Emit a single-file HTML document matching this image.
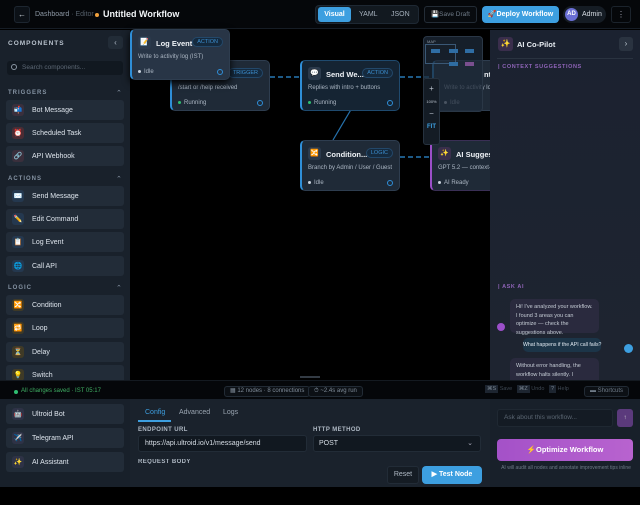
<!DOCTYPE html><html><head><style>
*{box-sizing:border-box;margin:0;padding:0}
body{width:640px;height:505px;background:#000;font-family:"Liberation Sans",sans-serif;color:#dfe6ee;position:relative;overflow:hidden;font-size:7px}
.a{position:absolute}
.item{position:absolute;left:6px;width:118px;height:20px;background:#222c38;border-radius:3px;font-size:7px;color:#dde4ec;display:flex;align-items:center;padding-left:6px}
.ic{width:12px;height:12px;border-radius:3px;background:#3a3440;margin-right:8px;font-size:7px;display:flex;align-items:center;justify-content:center}
.sec{position:absolute;left:8px;font-size:6px;letter-spacing:1px;color:#8593a3;font-weight:bold}
.car{position:absolute;right:8px;color:#8593a3;font-size:7px}
.node{position:absolute;width:100px;height:51px;background:#1f2a37;border:1px solid #2e3d4f;border-left:2px solid #2f8fd8;border-radius:5px;overflow:hidden}
.node .t{position:absolute;left:24px;top:9px;font-size:7.5px;font-weight:bold;color:#eef2f6;white-space:nowrap}
.node .ni{position:absolute;left:6px;top:6px;width:13px;height:13px;border-radius:3px;background:#2b3a4c;font-size:7px;text-align:center;line-height:13px}
.node .tag{position:absolute;right:6px;top:7px;font-size:5.5px;color:#3c8fd0;border:1px solid #23486a;background:#152a3e;border-radius:6px;padding:1px 4px}
.node .d{position:absolute;left:6px;top:24px;font-size:6px;color:#aab5c2;white-space:nowrap}
.node .s{position:absolute;left:6px;top:39px;font-size:6px;color:#aab5c2}
.node .s:before{content:"";display:inline-block;width:3px;height:3px;border-radius:50%;background:#c9d2dc;margin-right:3px;vertical-align:middle}
.node .s.g:before{background:#2fbf71}
.node .o{position:absolute;right:6px;top:39px;width:6px;height:6px;border:1.5px solid #2f8fd8;border-radius:50%}
.pill{position:absolute;height:11px;border:1px solid #222b35;background:#0c1015;border-radius:3px;font-size:6px;color:#7f8b98;line-height:9px;padding:0 5px;white-space:nowrap}
</style></head><body>
<!-- top bar -->
<div class="a" style="left:0;top:0;width:640px;height:29px;background:#05070a;border-bottom:1px solid #161d26"></div>
<div class="a" style="left:14px;top:6px;width:16px;height:17px;border:1px solid #1d2630;border-radius:3px;background:#0c1117;color:#cfd6de;font-size:8px;text-align:center;line-height:15px">←</div>
<div class="a" style="left:35px;top:11px;font-size:7px;color:#8d98a5;white-space:nowrap">Dashboard <span style="color:#555f6a">· Editor</span></div>
<div class="a" style="left:95px;top:13px;width:4px;height:4px;border-radius:50%;background:#f0a03c"></div>
<div class="a" style="left:103px;top:9px;font-size:9px;font-weight:bold;color:#f2f5f8">Untitled Workflow</div>
<div class="a" style="left:315px;top:5px;width:104px;height:19px;background:#121920;border:1px solid #1e2833;border-radius:4px"></div>
<div class="a" style="left:318px;top:7px;width:33px;height:15px;background:#3d9fe0;border-radius:3px;font-size:7px;font-weight:bold;color:#fff;text-align:center;line-height:15px">Visual</div>
<div class="a" style="left:359px;top:11px;font-size:7px;color:#a5b0bc">YAML</div>
<div class="a" style="left:391px;top:11px;font-size:7px;color:#a5b0bc">JSON</div>
<div class="a" style="left:424px;top:6px;width:53px;height:17px;border:1px solid #232c36;border-radius:3px;background:#080b0f;font-size:6.5px;color:#6f7b88;text-align:center;line-height:15px;white-space:nowrap">💾Save Draft</div>
<div class="a" style="left:482px;top:6px;width:77px;height:17px;border-radius:4px;background:#3d9fe0;font-size:7px;font-weight:bold;color:#fff;text-align:center;line-height:17px;white-space:nowrap">🚀Deploy Workflow</div>
<div class="a" style="left:563px;top:6px;width:43px;height:17px;border-radius:9px;background:#151c24"></div>
<div class="a" style="left:565px;top:8px;width:13px;height:13px;border-radius:50%;background:#6a6fd6;font-size:6px;font-weight:bold;text-align:center;line-height:13px;color:#fff">AD</div>
<div class="a" style="left:582px;top:11px;font-size:7px;color:#d8dee5">Admin</div>
<div class="a" style="left:611px;top:6px;width:20px;height:17px;border:1px solid #1b232c;border-radius:3px;color:#aab;text-align:center;font-size:8px;line-height:15px">⋮</div>

<!-- sidebar -->
<div class="a" style="left:0;top:30px;width:130px;height:350px;background:#19212b"></div>
<div class="a" style="left:8px;top:40px;font-size:6.5px;font-weight:bold;letter-spacing:1px;color:#b8c2cd">COMPONENTS</div>
<div class="a" style="left:108px;top:36px;width:15px;height:13px;background:#222c37;border-radius:3px;color:#a9b4c0;font-size:8px;text-align:center;line-height:13px">‹</div>
<div class="a" style="left:7px;top:61px;width:116px;height:14px;background:#111820;border-radius:3px;font-size:6.5px;color:#5d6875;padding-left:15px;line-height:14px">Search components...</div>
<div class="a" style="left:11px;top:64px;width:6px;height:6px;border:1px solid #8a96a3;border-radius:50%"></div>
<div class="sec" style="top:90px">TRIGGERS</div><div class="car" style="top:89px;left:116px">⌃</div>
<div class="item" style="top:100px"><span class="ic" style="background:#3a2f3c">📬</span>Bot Message</div>
<div class="item" style="top:123px"><span class="ic" style="background:#4a2c34">⏰</span>Scheduled Task</div>
<div class="item" style="top:146px"><span class="ic" style="background:#3a2f3c">🔗</span>API Webhook</div>
<div class="sec" style="top:176px">ACTIONS</div><div class="car" style="top:175px;left:116px">⌃</div>
<div class="item" style="top:186px"><span class="ic" style="background:#24384f">✉️</span>Send Message</div>
<div class="item" style="top:209px"><span class="ic" style="background:#24384f">✏️</span>Edit Command</div>
<div class="item" style="top:232px"><span class="ic" style="background:#24384f">📋</span>Log Event</div>
<div class="item" style="top:256px"><span class="ic" style="background:#24384f">🌐</span>Call API</div>
<div class="sec" style="top:285px">LOGIC</div><div class="car" style="top:284px;left:116px">⌃</div>
<div class="item" style="top:295px"><span class="ic" style="background:#3f3a26">🔀</span>Condition</div>
<div class="item" style="top:318px"><span class="ic" style="background:#3f3a26">🔁</span>Loop</div>
<div class="item" style="top:342px"><span class="ic" style="background:#3f3a26">⏳</span>Delay</div>
<div class="item" style="top:365px"><span class="ic" style="background:#3f3a26">💡</span>Switch</div>

<!-- canvas -->
<div class="a" style="left:130px;top:30px;width:360px;height:347px;background:#000"></div>
<div class="a" style="left:300px;top:376px;width:20px;height:2px;background:#333b44"></div>
<svg class="a" style="left:130px;top:30px" width="360" height="348">
<g stroke="#2f8fd8" stroke-width="1.2" stroke-dasharray="5 3" fill="none">
<line x1="140" y1="47" x2="170" y2="47"/><line x1="270" y1="47" x2="302" y2="47"/>
<line x1="270" y1="127" x2="300" y2="127"/><line x1="229" y1="66" x2="203" y2="110" stroke-dasharray="0" stroke-opacity=".8"/>
</g></svg>
<div class="node" style="left:170px;top:60px"><div class="tag">TRIGGER</div><div class="d">/start or /help received</div><div class="s g">Running</div><div class="o"></div></div>
<div class="node" style="left:130px;top:29px;background:#283546;box-shadow:0 3px 8px #000"><div class="ni">📝</div><div class="t">Log Event</div><div class="tag">ACTION</div><div class="d" style="top:24px">Write to activity log (IST)</div><div class="s">Idle</div><div class="o"></div></div>
<div class="node" style="left:300px;top:60px;background:#152433;border-color:#1f4a6e;border-left-color:#2f8fd8"><div class="ni">💬</div><div class="t">Send We...</div><div class="tag">ACTION</div><div class="d">Replies with intro + buttons</div><div class="s g">Running</div><div class="o"></div></div>
<div class="node" style="left:300px;top:140px"><div class="ni">🔀</div><div class="t">Condition...</div><div class="tag">LOGIC</div><div class="d">Branch by Admin / User / Guest</div><div class="s">Idle</div><div class="o"></div></div>
<div class="node" style="left:432px;top:60px;width:70px"><div class="t" style="left:50px">nt</div><div class="d" style="left:10px">Write to activity log (</div><div class="s" style="left:10px">Idle</div></div>
<div class="node" style="left:430px;top:140px;width:70px;border-color:#3a2f55;border-left:2px solid #9b4fc8"><div class="ni" style="background:#3a2f4c">✨</div><div class="t">AI Suggest</div><div class="d">GPT 5.2 — context-</div><div class="s">AI Ready</div></div>
<div class="a" style="left:423px;top:36px;width:60px;height:76px;background:rgba(30,42,56,.75);border:1px solid #2a3746;border-radius:4px"></div>
<div class="a" style="left:427px;top:39px;font-size:4px;color:#8a96a3">MAP</div>
<div class="a" style="left:425px;top:44px;width:31px;height:20px;border:1px solid #3a5876"></div>
<div class="a" style="left:431px;top:49px;width:9px;height:4px;background:#2f6da3"></div>
<div class="a" style="left:449px;top:49px;width:9px;height:4px;background:#2f6da3"></div>
<div class="a" style="left:465px;top:49px;width:9px;height:4px;background:#2f6da3"></div>
<div class="a" style="left:449px;top:62px;width:9px;height:4px;background:#2f6da3"></div>
<div class="a" style="left:465px;top:62px;width:9px;height:4px;background:#7a4f8f"></div>
<div class="a" style="left:423px;top:78px;width:17px;height:67px;background:#141c25;border:1px solid #26323f;border-radius:3px;font-size:6px;color:#bcc5cf;text-align:center">
<div style="margin-top:5px;font-size:8px">+</div><div style="margin-top:6px;font-size:4px">100%</div><div style="margin-top:5px;font-size:8px">−</div><div style="margin-top:6px;color:#3d9fe0;font-size:6px;font-weight:bold">FIT</div></div>

<!-- right panel -->
<div class="a" style="left:490px;top:30px;width:150px;height:350px;background:linear-gradient(#1b2230,#1e2430)"></div>
<div class="a" style="left:498px;top:37px;width:15px;height:14px;background:#3a2e4c;border-radius:3px;font-size:8px;text-align:center;line-height:14px">✨</div>
<div class="a" style="left:517px;top:40px;font-size:7.5px;font-weight:bold;color:#e8edf2">AI Co-Pilot</div>
<div class="a" style="left:619px;top:37px;width:14px;height:14px;background:#2a3340;border-radius:3px;color:#bcc6d0;font-size:8px;text-align:center;line-height:14px">›</div>
<div class="a" style="left:497px;top:58px;width:136px;height:1px;background:#2a3340"></div>
<div class="a" style="left:498px;top:64px;font-size:5.5px;font-weight:bold;color:#8f64b8;letter-spacing:.6px">| CONTEXT SUGGESTIONS</div>
<div class="a" style="left:498px;top:284px;font-size:5.5px;font-weight:bold;color:#8f64b8;letter-spacing:.6px">| ASK AI</div>
<div class="a" style="left:510px;top:299px;width:89px;height:34px;background:#2a2a3e;border-radius:5px;font-size:5.5px;color:#c5ccd5;padding:4px 6px;line-height:8.5px">Hi! I've analyzed your workflow. I found 3 areas you can optimize — check the suggestions above.</div>
<div class="a" style="left:497px;top:323px;width:8px;height:8px;border-radius:50%;background:#9b4fc8"></div>
<div class="a" style="left:523px;top:338px;width:78px;height:14px;background:#1c3548;border-radius:5px;font-size:5.2px;color:#e0e8f0;text-align:center;line-height:14px;white-space:nowrap">What happens if the API call fails?</div>
<div class="a" style="left:624px;top:344px;width:9px;height:9px;border-radius:50%;background:#3d9fe0"></div>
<div class="a" style="left:510px;top:358px;width:89px;height:22px;background:#2a2a3e;border-radius:5px 5px 0 0;font-size:5.5px;color:#c5ccd5;padding:4px 6px;line-height:8.5px;overflow:hidden">Without error handling, the workflow halts silently. I suggest adding a</div>

<!-- status bar -->
<div class="a" style="left:0;top:380px;width:640px;height:19px;background:#05070a;border-top:1px solid #141a21"></div>
<div class="a" style="left:14px;top:390px;width:4px;height:4px;border-radius:50%;background:#2fbf71"></div>
<div class="a" style="left:21px;top:388px;font-size:6px;color:#3fae63">All changes saved · IST 05:17</div>
<div class="pill" style="left:224px;top:386px">▦ 12 nodes · 8 connections</div>
<div class="pill" style="left:308px;top:386px">⏱ ~2.4s avg run</div>
<div class="a" style="left:485px;top:386px;font-size:5.5px;color:#3e4853;white-space:nowrap"><span style="background:#1d2530;color:#7a8692;padding:1px 2px">⌘S</span> Save &nbsp; <span style="background:#1d2530;color:#7a8692;padding:1px 2px">⌘Z</span> Undo &nbsp; <span style="background:#1d2530;color:#7a8692;padding:1px 2px">?</span> Help</div>
<div class="pill" style="left:584px;top:386px;color:#6f7b88">▬ Shortcuts</div>

<!-- bottom -->
<div class="a" style="left:0;top:399px;width:640px;height:88px;background:#18202a"></div>
<div class="a" style="left:130px;top:399px;width:360px;height:88px;background:#1a222c"></div>
<div class="item" style="top:404px"><span class="ic" style="background:#2e3246">🤖</span>Ultroid Bot</div>
<div class="item" style="top:428px"><span class="ic" style="background:#2e3246">✈️</span>Telegram API</div>
<div class="item" style="top:452px"><span class="ic" style="background:#2e3246">✨</span>AI Assistant</div>
<div class="a" style="left:145px;top:409px;font-size:7px;color:#3d9fe0">Config</div>
<div class="a" style="left:138px;top:420px;width:33px;height:1.5px;background:#3d9fe0"></div>
<div class="a" style="left:179px;top:409px;font-size:7px;color:#9aa5b1">Advanced</div>
<div class="a" style="left:223px;top:409px;font-size:7px;color:#9aa5b1">Logs</div>
<div class="a" style="left:138px;top:427px;font-size:6px;font-weight:bold;color:#aeb8c3;letter-spacing:.4px">ENDPOINT URL</div>
<div class="a" style="left:138px;top:435px;width:169px;height:17px;background:#111820;border:1px solid #222c37;border-radius:3px;font-size:7px;color:#d6dde5;padding-left:6px;line-height:15px">https://api.ultroid.io/v1/message/send</div>
<div class="a" style="left:138px;top:459px;font-size:6px;font-weight:bold;color:#aeb8c3;height:5px;overflow:hidden;letter-spacing:.4px">REQUEST BODY</div>
<div class="a" style="left:313px;top:427px;font-size:6px;font-weight:bold;color:#aeb8c3;letter-spacing:.4px">HTTP METHOD</div>
<div class="a" style="left:313px;top:435px;width:168px;height:17px;background:#111820;border:1px solid #222c37;border-radius:3px;font-size:7px;color:#d6dde5;padding-left:5px;line-height:15px">POST<span style="position:absolute;right:7px;color:#aab">⌄</span></div>
<div class="a" style="left:387px;top:466px;width:32px;height:18px;background:#151c24;border:1px solid #222c37;border-radius:3px;font-size:7px;color:#aeb8c3;text-align:center;line-height:16px">Reset</div>
<div class="a" style="left:422px;top:466px;width:60px;height:18px;background:#3d9fe0;border-radius:4px;font-size:7px;font-weight:bold;color:#fff;text-align:center;line-height:18px">▶ Test Node</div>
<div class="a" style="left:497px;top:409px;width:116px;height:18px;background:#141b24;border:1px solid #1f2832;border-radius:3px;font-size:6.5px;color:#5b6672;padding-left:6px;line-height:16px">Ask about this workflow...</div>
<div class="a" style="left:617px;top:409px;width:16px;height:18px;background:#5b3a7c;border-radius:3px;color:#ddd;font-size:6px;text-align:center;line-height:18px">↑</div>
<div class="a" style="left:497px;top:439px;width:136px;height:22px;background:linear-gradient(90deg,#a451c8,#b863cf);border-radius:4px;font-size:7.5px;font-weight:bold;color:#fff;text-align:center;line-height:22px">⚡Optimize Workflow</div>
<div class="a" style="left:500px;top:465px;width:132px;font-size:5px;color:#6f7b88;text-align:center;line-height:7px">AI will audit all nodes and annotate improvement tips inline</div>
</body></html>
